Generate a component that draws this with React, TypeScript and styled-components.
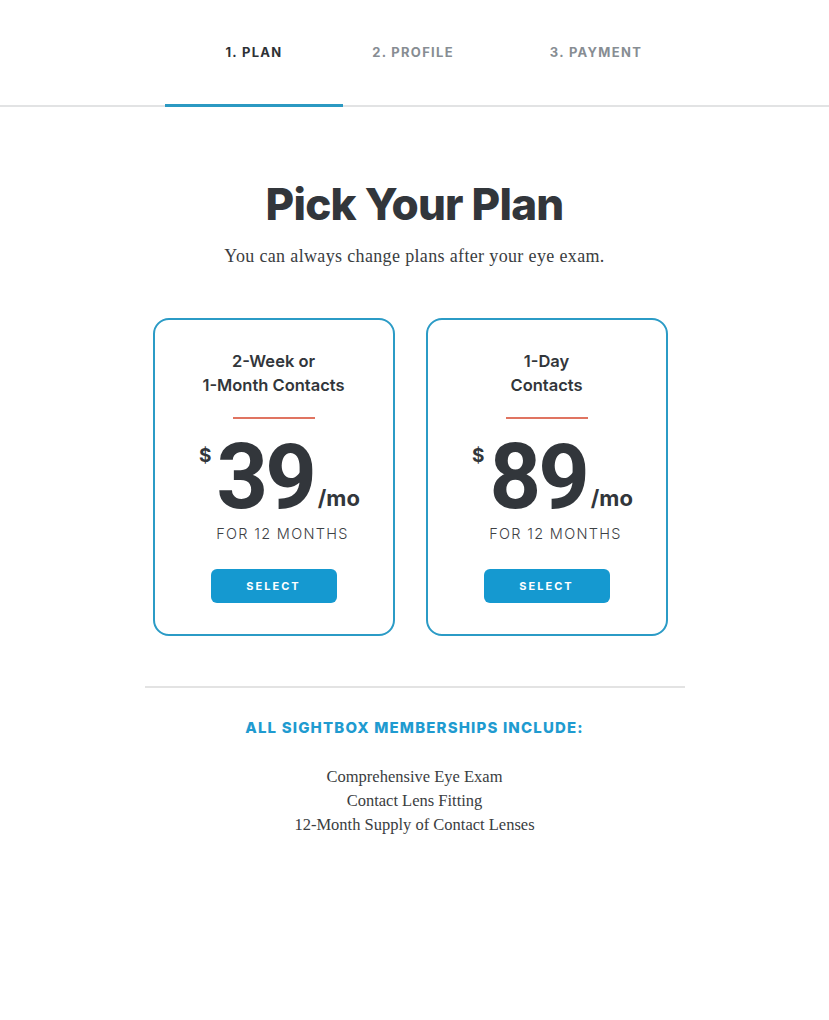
import styled, { createGlobalStyle } from "styled-components";

const GlobalStyle = createGlobalStyle`
  body {
    margin: 0;
    background: #ffffff;
    font-family: "Inter", "Liberation Sans", sans-serif;
    color: #32363b;
  }
`;

const Page = styled.div`
  display: flex;
  flex-direction: column;
  align-items: center;
  padding-bottom: 80px;
`;

const StepNav = styled.nav`
  width: 100%;
  height: 107px;
  display: flex;
  padding-left: 165px;
  box-sizing: border-box;
  border-bottom: 2px solid #e2e3e4;
`;

const Step = styled.div<{ $width: number; $active?: boolean }>`
  width: ${(p) => p.$width}px;
  display: flex;
  justify-content: center;
  padding-top: 44px;
  box-sizing: border-box;
  margin-bottom: -2px;
  border-bottom: 3px solid ${(p) => (p.$active ? "#2b99c2" : "transparent")};
  font-size: 13px;
  font-weight: 700;
  letter-spacing: 1.3px;
  color: ${(p) => (p.$active ? "#2d3135" : "#878d93")};
`;

const Title = styled.h1`
  margin: 71px 0 0;
  font-size: 44px;
  line-height: 1.2;
  font-weight: 800;
  letter-spacing: -0.8px;
  color: #32363b;
`;

const Subtitle = styled.p`
  margin: 13px 0 0;
  font-family: "Liberation Serif", serif;
  font-size: 18px;
  line-height: 24px;
  letter-spacing: 0.35px;
  color: #3a3d41;
`;

const Cards = styled.div`
  display: flex;
  gap: 31px;
  margin-top: 50px;
  padding-right: 9px;
`;

const Card = styled.div`
  width: 242px;
  box-sizing: border-box;
  border: 2px solid #2b9bc6;
  border-radius: 16px;
  padding: 29px 0 31px;
  display: flex;
  flex-direction: column;
  align-items: center;
`;

const CardTitle = styled.h2`
  margin: 0;
  text-align: center;
  font-size: 16.5px;
  line-height: 24px;
  font-weight: 600;
  color: #32363b;
`;

const Accent = styled.div`
  width: 82px;
  height: 2px;
  margin-top: 20px;
  background: #e07461;
`;

const PriceRow = styled.div`
  display: flex;
  align-items: baseline;
  margin-top: 20px;
  padding-left: 12px;
`;

const Dollar = styled.span`
  align-self: flex-start;
  margin-top: 7px;
  margin-right: 5px;
  font-size: 19px;
  font-weight: 700;
  line-height: 1;
`;

const Amount = styled.span`
  font-family: "Roboto", "Inter", sans-serif;
  font-size: 90px;
  line-height: 78px;
  font-weight: 700;
  letter-spacing: -3px;
  color: #32363b;
`;

const PerMonth = styled.span`
  align-self: flex-end;
  margin: 0 0 8px 4px;
  font-size: 22px;
  line-height: 1;
  font-weight: 700;
`;

const Term = styled.div`
  margin: 7px 0 0 18px;
  font-size: 14.5px;
  line-height: 20px;
  font-weight: 300;
  letter-spacing: 1.3px;
  color: #3d4145;
`;

const SelectButton = styled.button`
  margin-top: 25px;
  width: 126px;
  height: 34px;
  border: none;
  border-radius: 6px;
  background: #1599d0;
  color: #ffffff;
  font-family: "Inter", "Liberation Sans", sans-serif;
  font-size: 11px;
  font-weight: 700;
  letter-spacing: 2px;
  cursor: pointer;
`;

const Divider = styled.hr`
  width: 540px;
  height: 2px;
  margin: 50px 0 0;
  border: none;
  background: #e3e3e3;
`;

const IncludesHeading = styled.h3`
  margin: 30px 0 0;
  font-size: 15px;
  line-height: 20px;
  font-weight: 800;
  letter-spacing: 1.15px;
  color: #1f9bd0;
`;

const IncludesList = styled.ul`
  list-style: none;
  margin: 27px 0 0;
  padding: 0;
  text-align: center;
  font-family: "Liberation Serif", serif;
  font-size: 16.5px;
  line-height: 24px;
  color: #3a3d41;
`;

type Plan = {
  id: string;
  lines: string[];
  price: number;
};

const plans: Plan[] = [
  { id: "monthly", lines: ["2-Week or", "1-Month Contacts"], price: 39 },
  { id: "daily", lines: ["1-Day", "Contacts"], price: 89 },
];

const steps = [
  { label: "1. PLAN", width: 178, active: true },
  { label: "2. PROFILE", width: 140 },
  { label: "3. PAYMENT", width: 226 },
];

const perks = [
  "Comprehensive Eye Exam",
  "Contact Lens Fitting",
  "12-Month Supply of Contact Lenses",
];

const App = () => {
  return (
    <>
      <GlobalStyle />
      <Page>
        <StepNav>
          {steps.map((s) => (
            <Step key={s.label} $width={s.width} $active={s.active}>
              {s.label}
            </Step>
          ))}
        </StepNav>

        <Title>Pick Your Plan</Title>
        <Subtitle>You can always change plans after your eye exam.</Subtitle>

        <Cards>
          {plans.map((plan) => (
            <Card key={plan.id}>
              <CardTitle>
                {plan.lines[0]}
                <br />
                {plan.lines[1]}
              </CardTitle>
              <Accent />
              <PriceRow>
                <Dollar>$</Dollar>
                <Amount>{plan.price}</Amount>
                <PerMonth>/mo</PerMonth>
              </PriceRow>
              <Term>FOR 12 MONTHS</Term>
              <SelectButton>SELECT</SelectButton>
            </Card>
          ))}
        </Cards>

        <Divider />
        <IncludesHeading>ALL SIGHTBOX MEMBERSHIPS INCLUDE:</IncludesHeading>
        <IncludesList>
          {perks.map((p) => (
            <li key={p}>{p}</li>
          ))}
        </IncludesList>
      </Page>
    </>
  );
};

export default App;
